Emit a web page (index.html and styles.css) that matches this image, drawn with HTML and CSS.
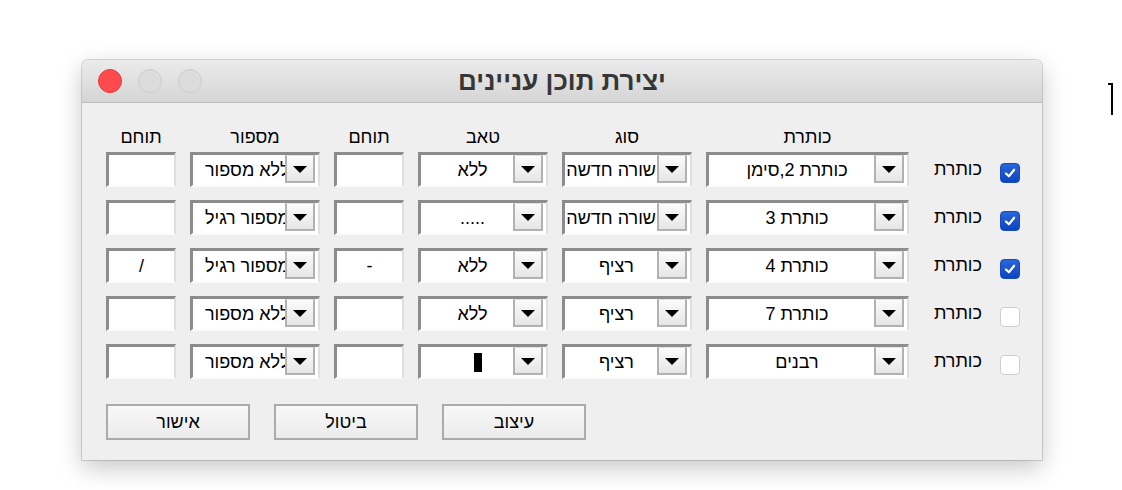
FILE: index.html
```html
<!DOCTYPE html>
<html lang="he">
<head>
<meta charset="utf-8">
<title>יצירת תוכן עניינים</title>
<link rel="stylesheet" href="styles.css">
</head>
<body>
<div class="caret-mark"></div>
<div class="window">
  <div class="titlebar">
    <div class="lights">
      <span class="light red"></span>
      <span class="light"></span>
      <span class="light"></span>
    </div>
    <div class="title">יצירת תוכן עניינים</div>
  </div>
  <div class="content" dir="rtl">
    <div class="grid head">
      <div></div>
      <div></div>
      <div class="hcell">כותרת</div>
      <div class="hcell">סוג</div>
      <div class="hcell">טאב</div>
      <div class="hcell">תוחם</div>
      <div class="hcell">מספור</div>
      <div class="hcell">תוחם</div>
    </div>
    <div class="rows">
      <div class="grid row">
        <span class="check on"><svg viewBox="0 0 20 20"><path d="M5.5 10.5 L8.8 13.6 L14.6 6.4"/></svg></span>
        <div class="label">כותרת</div>
        <div class="field combo"><span class="val">כותרת 2,סימן</span><span class="btn"><i></i></span></div>
        <div class="field combo"><span class="val">שורה חדשה</span><span class="btn"><i></i></span></div>
        <div class="field combo"><span class="val">ללא</span><span class="btn"><i></i></span></div>
        <div class="field"></div>
        <div class="field combo num"><span class="val">ללא מספור</span><span class="btn"><i></i></span></div>
        <div class="field"></div>
      </div>
      <div class="grid row">
        <span class="check on"><svg viewBox="0 0 20 20"><path d="M5.5 10.5 L8.8 13.6 L14.6 6.4"/></svg></span>
        <div class="label">כותרת</div>
        <div class="field combo"><span class="val">כותרת 3</span><span class="btn"><i></i></span></div>
        <div class="field combo"><span class="val">שורה חדשה</span><span class="btn"><i></i></span></div>
        <div class="field combo"><span class="val">.....</span><span class="btn"><i></i></span></div>
        <div class="field"></div>
        <div class="field combo num"><span class="val">מספור רגיל</span><span class="btn"><i></i></span></div>
        <div class="field"></div>
      </div>
      <div class="grid row">
        <span class="check on"><svg viewBox="0 0 20 20"><path d="M5.5 10.5 L8.8 13.6 L14.6 6.4"/></svg></span>
        <div class="label">כותרת</div>
        <div class="field combo"><span class="val">כותרת 4</span><span class="btn"><i></i></span></div>
        <div class="field combo"><span class="val">רציף</span><span class="btn"><i></i></span></div>
        <div class="field combo"><span class="val">ללא</span><span class="btn"><i></i></span></div>
        <div class="field"><span class="val">-</span></div>
        <div class="field combo num"><span class="val">מספור רגיל</span><span class="btn"><i></i></span></div>
        <div class="field"><span class="val">/</span></div>
      </div>
      <div class="grid row">
        <span class="check"></span>
        <div class="label">כותרת</div>
        <div class="field combo"><span class="val">כותרת 7</span><span class="btn"><i></i></span></div>
        <div class="field combo"><span class="val">רציף</span><span class="btn"><i></i></span></div>
        <div class="field combo"><span class="val">ללא</span><span class="btn"><i></i></span></div>
        <div class="field"></div>
        <div class="field combo num"><span class="val">ללא מספור</span><span class="btn"><i></i></span></div>
        <div class="field"></div>
      </div>
      <div class="grid row">
        <span class="check"></span>
        <div class="label">כותרת</div>
        <div class="field combo"><span class="val">רבנים</span><span class="btn"><i></i></span></div>
        <div class="field combo"><span class="val">רציף</span><span class="btn"><i></i></span></div>
        <div class="field combo"><span class="val"><b class="block"></b></span><span class="btn"><i></i></span></div>
        <div class="field"></div>
        <div class="field combo num"><span class="val">ללא מספור</span><span class="btn"><i></i></span></div>
        <div class="field"></div>
      </div>
    </div>
    <div class="buttons">
      <div class="pbtn">עיצוב</div>
      <div class="pbtn">ביטול</div>
      <div class="pbtn">אישור</div>
    </div>
  </div>
</div>
</body>
</html>
```

FILE: styles.css
```css
html, body {
  margin: 0;
  padding: 0;
  background: #ffffff;
  font-family: "Liberation Sans", Arial, "DejaVu Sans", sans-serif;
  color: #000;
}

body {
  position: relative;
  width: 1122px;
  height: 490px;
  overflow: hidden;
}

.caret-mark {
  position: absolute;
  left: 1111px;
  top: 83px;
  width: 2px;
  height: 32px;
  background: #000;
}
.caret-mark::before {
  content: "";
  position: absolute;
  left: -3px;
  top: 0;
  width: 3px;
  height: 2px;
  background: #000;
}

.window {
  margin-left: 82px;
  margin-top: 60px;
  width: 960px;
  height: 400px;
  background: #efefef;
  border-radius: 6px 6px 0 0;
  box-shadow: 0 0 0 1px rgba(0, 0, 0, 0.14), 0 8px 24px rgba(0, 0, 0, 0.22);
  display: flex;
  flex-direction: column;
}

.titlebar {
  height: 42px;
  border-bottom: 1px solid #bcbcbc;
  background: linear-gradient(#ebebeb, #d5d5d5);
  border-radius: 6px 6px 0 0;
  display: flex;
  align-items: center;
  position: relative;
}

.lights {
  display: flex;
  gap: 16px;
  padding-left: 16px;
}

.light {
  width: 22px;
  height: 22px;
  border-radius: 50%;
  background: #dcdcdc;
  border: 1px solid #cdcdcd;
}
.light.red {
  background: #ff4b4d;
  border-color: #e23a3c;
}

.title {
  position: absolute;
  left: 0;
  right: 0;
  text-align: center;
  font-size: 26px;
  font-weight: bold;
  color: #363636;
  line-height: 42px;
}

.content {
  padding: 19px 22px 0 24px;
}

.grid {
  display: grid;
  grid-template-columns: 20px 63px 203px 130px 130px 70px 130px 70px;
  column-gap: 14px;
}

.head {
  height: 30px;
  align-items: center;
}

.hcell {
  text-align: center;
  font-size: 18px;
}

.rows {
  display: flex;
  flex-direction: column;
  gap: 13px;
}

.row {
  height: 35px;
  align-items: center;
}

.check {
  width: 18px;
  height: 18px;
  border: 1px solid #cfcfcf;
  border-radius: 4px;
  background: #fff;
  margin-top: 7px;
  display: block;
}
.check.on {
  border-color: #1a49b8;
  background: linear-gradient(#2a66dc, #0d44c0);
}
.check svg {
  width: 18px;
  height: 18px;
  display: block;
}
.check svg path {
  fill: none;
  stroke: #fff;
  stroke-width: 2.4;
  stroke-linecap: round;
  stroke-linejoin: round;
}

.label {
  font-size: 18px;
  padding-right: 4px;
  text-align: right;
}

.field {
  height: 35px;
  box-sizing: border-box;
  background: #fff;
  border-top: 3px solid #8c8c8c;
  border-left: 3px solid #8c8c8c;
  border-right: 2px solid #dedede;
  border-bottom: 2px solid #fbfbfb;
  position: relative;
  display: flex;
  align-items: center;
  justify-content: center;
  font-size: 18px;
  overflow: hidden;
}

.field.combo {
  justify-content: flex-start;
  padding-left: 12px;
  padding-right: 34px;
}

.field.combo .val {
  margin-left: auto;
  margin-right: auto;
}

.field.combo.num {
  justify-content: flex-end;
  padding-right: 0;
}
.field.combo.num .val {
  margin: 0;
}

.val {
  white-space: nowrap;
  flex: none;
}

.btn {
  position: absolute;
  top: 0;
  right: 3px;
  width: 30px;
  height: 28px;
  box-sizing: border-box;
  border: 2px solid #b2b2b2;
  border-top: 1px solid #e2e2e2;
  background: linear-gradient(#fbfbfb, #e6e6e6);
  display: flex;
  align-items: center;
  justify-content: center;
}
.btn i {
  width: 0;
  height: 0;
  border-left: 7px solid transparent;
  border-right: 7px solid transparent;
  border-top: 7px solid #000;
  margin-top: 2px;
}

.block {
  display: inline-block;
  width: 8px;
  height: 19px;
  background: #000;
  vertical-align: middle;
  margin-left: 10px;
}

.buttons {
  display: flex;
  justify-content: flex-end;
  gap: 24px;
  margin-top: 25px;
  margin-right: 434px;
}

.pbtn {
  width: 144px;
  height: 36px;
  box-sizing: border-box;
  border: 2px solid #ababab;
  background: linear-gradient(#f8f8f8, #ebebeb);
  display: flex;
  align-items: center;
  justify-content: center;
  font-size: 18px;
}
```
